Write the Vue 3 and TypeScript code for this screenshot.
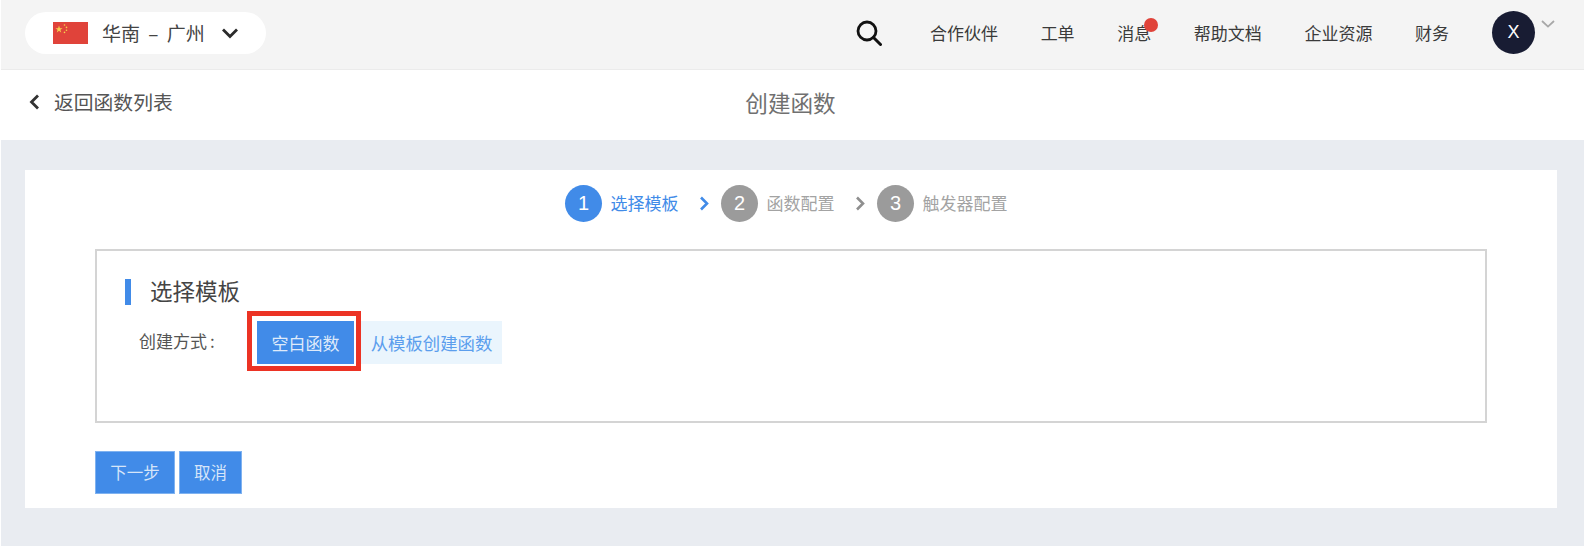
<script setup lang="ts">
const navItems: string[] = ['合作伙伴', '工单', '消息', '帮助文档', '企业资源', '财务']
const steps = [
  { n: 1, label: '选择模板', active: true },
  { n: 2, label: '函数配置', active: false },
  { n: 3, label: '触发器配置', active: false },
]
</script>

<template>
  <div class="page">
    <header class="topbar">
      <div class="region">
        <svg class="flag" viewBox="0 0 35 22" width="35" height="22">
          <rect width="35" height="22" fill="#e0433a" />
          <polygon points="6,3.6 6.9,6.2 9.6,6.2 7.4,7.8 8.2,10.4 6,8.8 3.8,10.4 4.6,7.8 2.4,6.2 5.1,6.2" fill="#f6d04d" />
          <circle cx="11.5" cy="3" r="0.8" fill="#f6d04d" />
          <circle cx="13.5" cy="5.4" r="0.8" fill="#f6d04d" />
          <circle cx="13.5" cy="8.2" r="0.8" fill="#f6d04d" />
          <circle cx="11.5" cy="10.4" r="0.8" fill="#f6d04d" />
        </svg>
        <span class="region-name">华南 – 广州</span>
        <svg class="region-caret" viewBox="0 0 18 12" width="18" height="12">
          <path d="M2 2.5 L9 9.5 L16 2.5" fill="none" stroke="#2b2b2b" stroke-width="2.8" />
        </svg>
      </div>
      <svg class="search" viewBox="0 0 26 26" width="26" height="26">
        <circle cx="11" cy="11" r="9" fill="none" stroke="#111" stroke-width="2.8" />
        <path d="M17.5 17.5 L24.5 24.5" stroke="#111" stroke-width="3" stroke-linecap="round" />
      </svg>
      <nav class="nav">
        <a v-for="item in navItems" :key="item" class="nav-item">
          {{ item }}
          <i v-if="item === '消息'" class="dot"></i>
        </a>
      </nav>
      <div class="avatar">X</div>
      <svg class="avatar-caret" viewBox="0 0 14 8" width="14" height="8">
        <path d="M1 1 L7 6.6 L13 1" fill="none" stroke="#a8a8a8" stroke-width="1.8" />
      </svg>
    </header>

    <div class="subbar">
      <a class="back">
        <svg viewBox="0 0 11 16" width="11" height="16">
          <path d="M9 1.5 L2.5 8 L9 14.5" fill="none" stroke="#333" stroke-width="2.8" />
        </svg>
        <span>返回函数列表</span>
      </a>
      <h1 class="page-title">创建函数</h1>
    </div>

    <main class="content">
      <section class="card">
        <div class="steps">
          <template v-for="(step, i) in steps" :key="step.n">
            <svg
              v-if="i > 0"
              class="step-arrow"
              :class="{ 'step-arrow-active': i === 1 }"
              viewBox="0 0 10 15"
              width="10"
              height="15"
            >
              <path d="M2 1.5 L8 7.5 L2 13.5" fill="none" stroke="currentColor" stroke-width="2.6" />
            </svg>
            <div class="step" :class="{ 'step-active': step.active }">
              <span class="step-num">{{ step.n }}</span>
              <span class="step-label">{{ step.label }}</span>
            </div>
          </template>
        </div>

        <div class="panel">
          <h2 class="panel-title">选择模板</h2>
          <div class="method">
            <span class="method-label">创建方式<span class="colon">:</span></span>
            <div class="method-options">
              <button class="option option-on">空白函数</button>
              <button class="option option-off">从模板创建函数</button>
            </div>
          </div>
        </div>

        <div class="actions">
          <button class="action action-next">下一步</button>
          <button class="action action-cancel">取消</button>
        </div>
      </section>
    </main>
  </div>
</template>

<style>
html, body { margin: 0; padding: 0; background: #e9ecf1; }
</style>

<style scoped>
* { box-sizing: border-box; }
.page {
  width: 1584px;
  height: 546px;
  overflow: hidden;
  background: #e9ecf1;
  border-left: 1px solid #fff;
  font-family: "Noto Sans CJK SC", "Liberation Sans", sans-serif;
  color: #333;
}
.topbar {
  height: 70px;
  display: flex;
  align-items: center;
  background: #f4f4f4;
  border-bottom: 1px solid #ebebeb;
  padding: 0 29px 4px 24px;
}
.region {
  width: 241px;
  height: 42px;
  border-radius: 21px;
  background: #fff;
  display: flex;
  align-items: center;
  padding-left: 28px;
}
.flag { flex: none; }
.region-name {
  margin-left: 14px;
  font-size: 19px;
  line-height: 24px;
  word-spacing: 4px;
  white-space: pre;
  width: 105px;
  color: #444;
}
.region-caret { margin-left: 14px; flex: none; }
.search { margin-left: auto; flex: none; }
.nav {
  display: flex;
  align-items: center;
  gap: 42.6px;
  margin-left: 48px;
}
.nav-item {
  position: relative;
  font-size: 17px;
  line-height: 24px;
  color: #3a3a3a;
}
.dot {
  position: absolute;
  top: -3px;
  right: -7px;
  width: 14px;
  height: 14px;
  border-radius: 50%;
  background: #e0433a;
}
.avatar {
  width: 43px;
  height: 43px;
  margin-left: 43px;
  border-radius: 50%;
  background: #181c33;
  color: #fff;
  font-family: "Liberation Sans", sans-serif;
  font-size: 18px;
  display: flex;
  align-items: center;
  justify-content: center;
}
.avatar-caret { align-self: flex-start; margin: 20px 0 0 6px; flex: none; }
.subbar {
  position: relative;
  height: 70px;
  background: #fff;
  display: flex;
  align-items: center;
  justify-content: center;
}
.back {
  position: absolute;
  left: 28px;
  top: 18px;
  display: flex;
  align-items: center;
  gap: 14px;
  font-size: 19.8px;
  line-height: 28px;
  color: #555;
}
.page-title {
  margin: 0 4px 4px 0;
  font-size: 22.6px;
  font-weight: 400;
  line-height: 30px;
  color: #707070;
}
.content { padding: 30px 27px 0 24px; }
.card {
  height: 338px;
  background: #fff;
  padding: 15px 70px 0;
}
.steps {
  height: 37px;
  display: flex;
  align-items: center;
  margin-left: 470px;
}
.step { display: flex; align-items: center; gap: 8.5px; color: #a3a3a3; }
.step-active { color: #418be8; }
.step-num {
  width: 37px;
  height: 37px;
  border-radius: 50%;
  background: #9b9b9b;
  color: #fff;
  font-family: "Liberation Sans", sans-serif;
  font-size: 20px;
  display: flex;
  align-items: center;
  justify-content: center;
}
.step-active .step-num { background: #418be8; }
.step-label { font-size: 17px; line-height: 24px; padding-bottom: 2px; }
.step-arrow { margin: 0 12.5px 0 20px; color: #8f8f8f; flex: none; }
.step-arrow-active { color: #418be8; }
.panel {
  width: 1392px;
  height: 174px;
  margin-top: 27px;
  border: 2px solid #d4d4d4;
  padding: 28px 0 0 28px;
}
.panel-title {
  margin: 0;
  height: 26px;
  border-left: 6px solid #418be8;
  padding-left: 19px;
  font-size: 22.5px;
  font-weight: 400;
  line-height: 23px;
  color: #444;
}
.method {
  display: flex;
  align-items: center;
  margin-top: 16px;
  height: 43px;
}
.method-label {
  margin-left: 14px;
  width: 118px;
  font-size: 17px;
  line-height: 22px;
  color: #555;
  padding-bottom: 4px;
}
.colon { margin-left: 3px; }
.method-options { display: flex; gap: 7px; }
.option {
  height: 43px;
  border: 0;
  padding: 0;
  font-family: inherit;
  font-size: 17px;
  line-height: 43px;
}
.option-on {
  position: relative;
  width: 97px;
  background: #418be8;
  color: #dfeafa;
}
.option-on::after {
  content: "";
  position: absolute;
  left: -10px;
  right: -7px;
  top: -10px;
  bottom: -7px;
  border: 5px solid #ec3324;
}
.option-off {
  width: 141px;
  background: #eaf5fd;
  color: #5b9eed;
  font-size: 17.4px;
}
.actions { display: flex; gap: 4px; margin-top: 28px; }
.action {
  height: 43px;
  border: 1px solid #7fb2f0;
  background: #418be8;
  color: #d6e5f9;
  font-family: inherit;
  font-size: 16.5px;
  line-height: 41px;
  padding: 0;
}
.action-next { width: 80px; }
.action-cancel { width: 63px; }
</style>
